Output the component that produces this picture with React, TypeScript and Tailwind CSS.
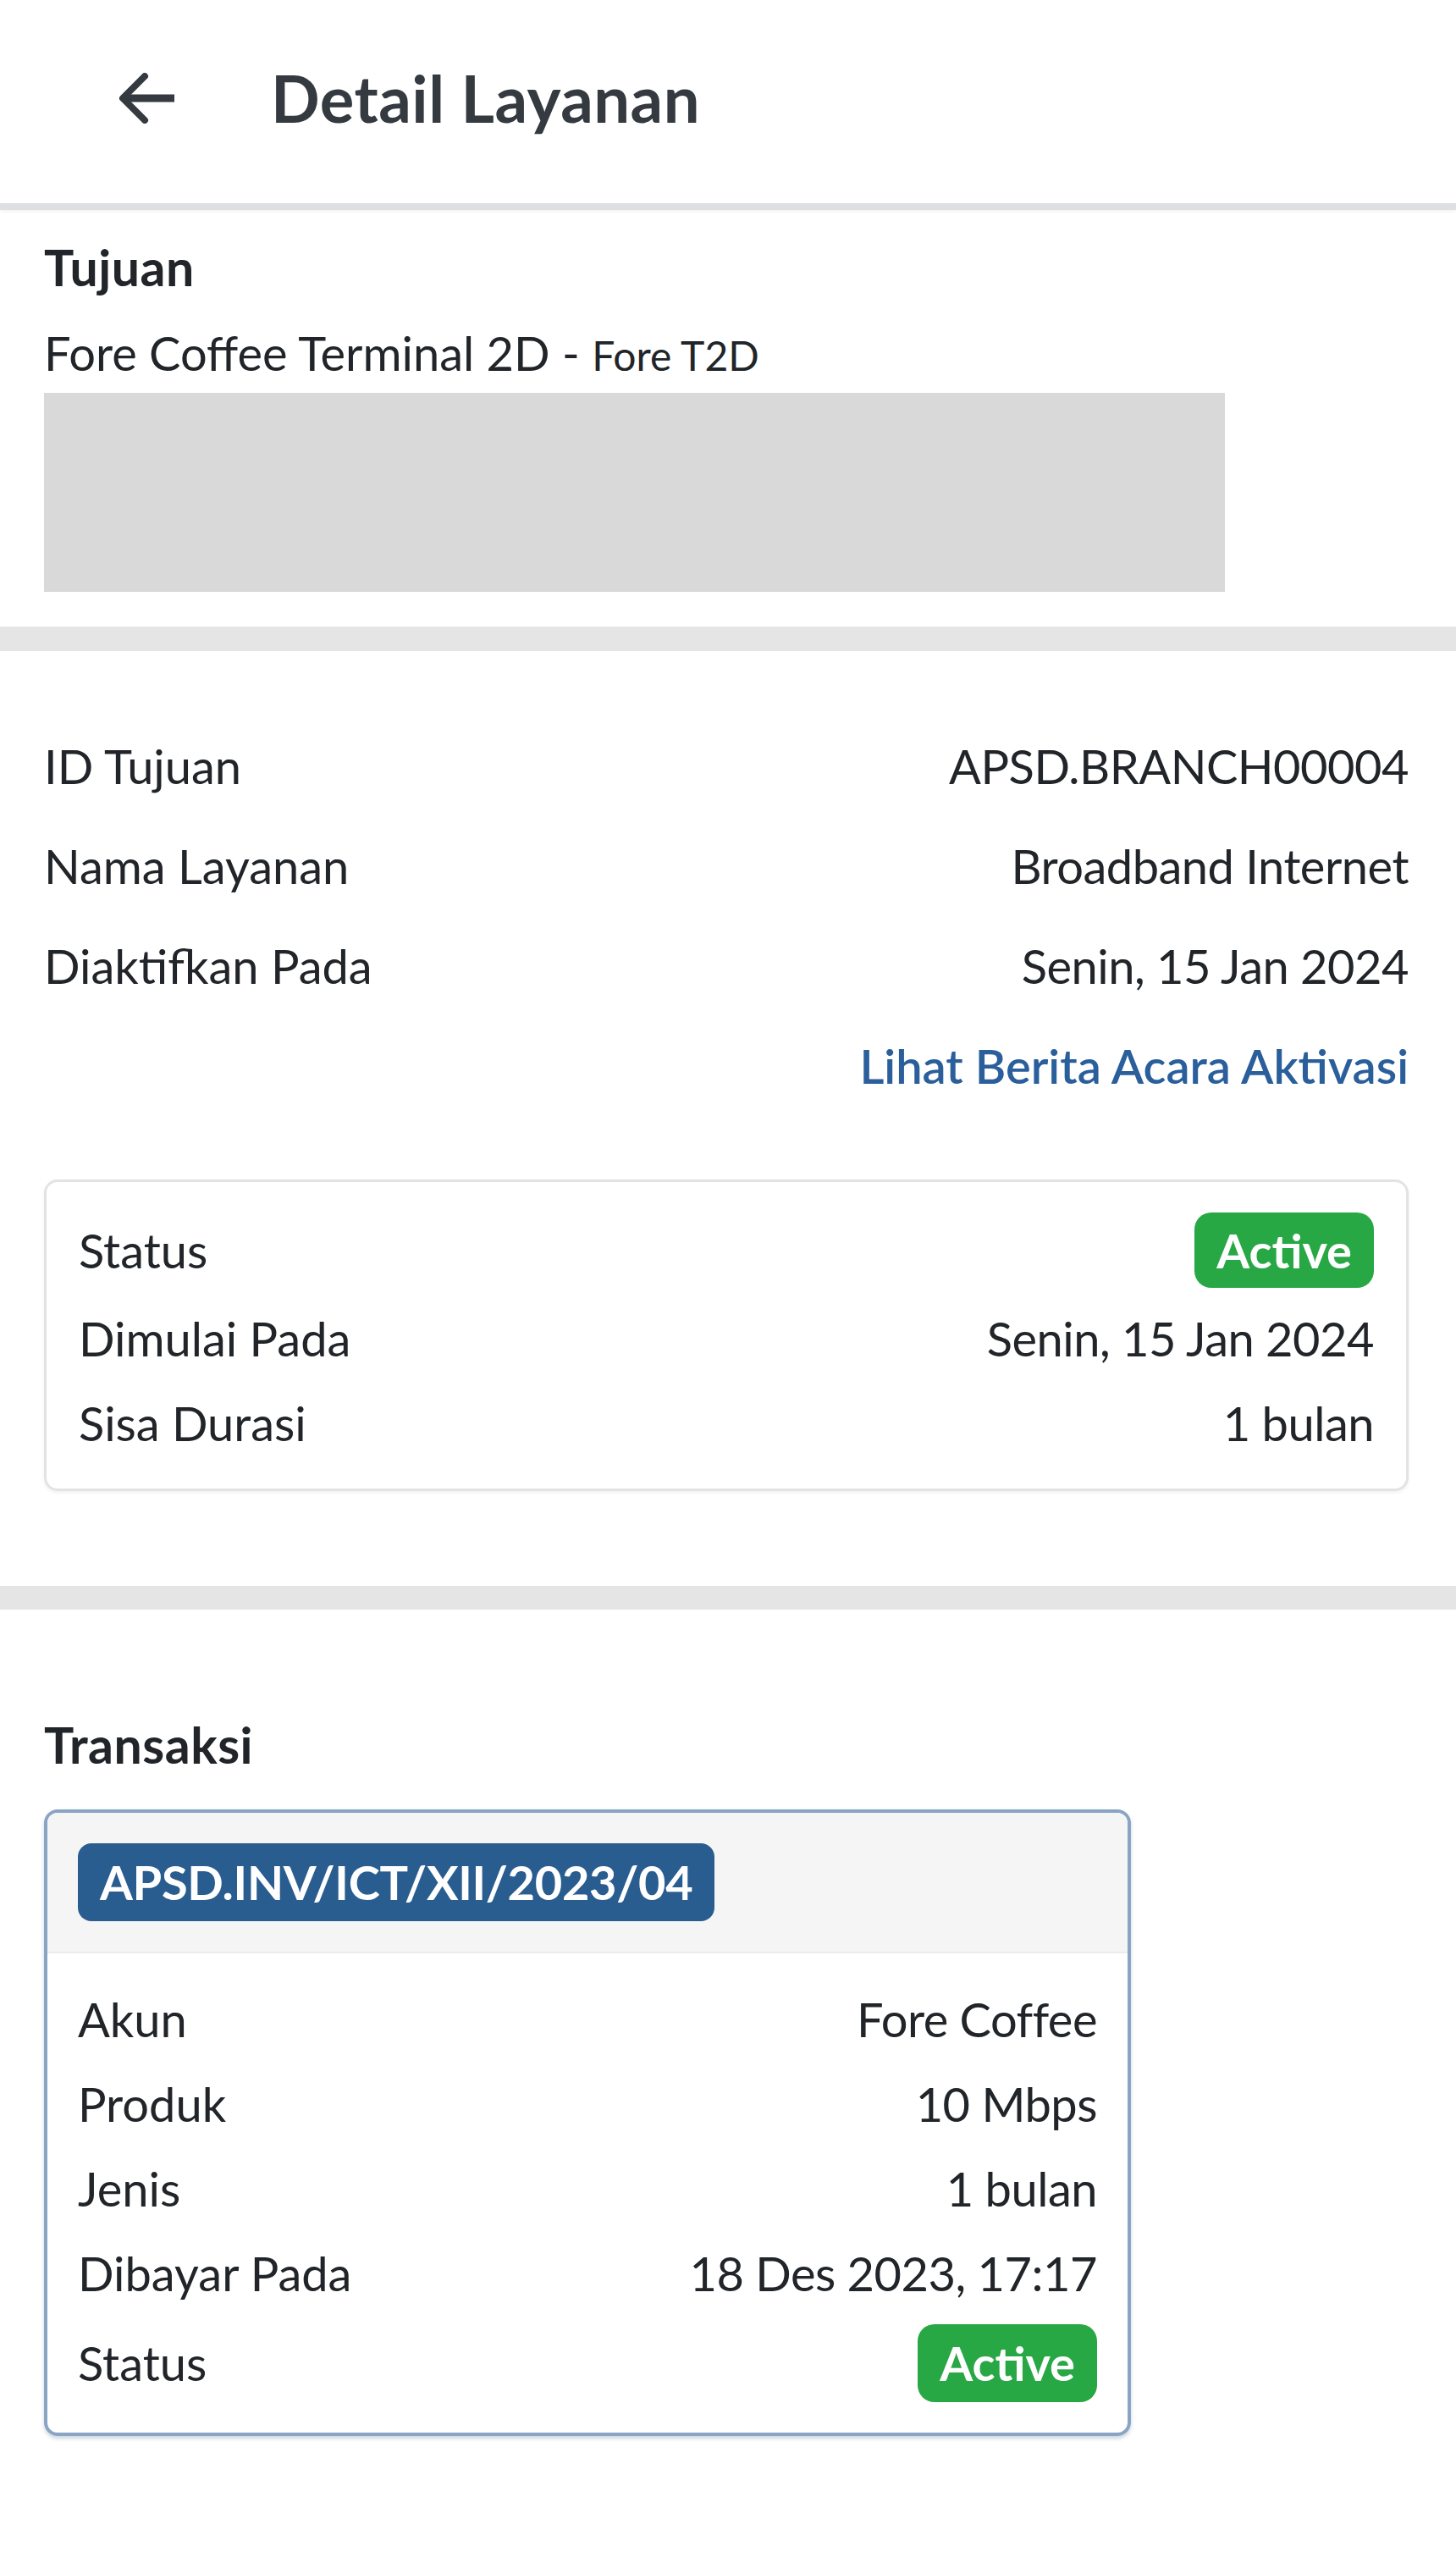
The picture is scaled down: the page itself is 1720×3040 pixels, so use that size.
import React from 'react';

type TRow = { label: string; value: React.ReactNode };

const ActiveBadge: React.FC<{ className?: string }> = ({ className = '' }) => (
  <span
    className={`inline-flex items-center justify-center px-[26px] rounded-[20px] bg-[#28a745] text-white font-bold text-[56px] leading-none ${className}`}
  >
    Active
  </span>
);

const InfoRow: React.FC<TRow> = ({ label, value }) => (
  <div className="flex justify-between items-center min-h-[80px]">
    <span>{label}</span>
    <span className="text-right tracking-[-0.5px]">{value}</span>
  </div>
);

const BackArrow = () => (
  <svg width="70" height="60" viewBox="0 0 70 60" fill="none" className="shrink-0">
    <path d="M66 30H6" stroke="#343a40" strokeWidth="9" strokeLinecap="butt" />
    <path d="M31 4L5 30l26 26" stroke="#343a40" strokeWidth="8" strokeLinecap="round" strokeLinejoin="round" />
  </svg>
);

export default function App() {
  const serviceRows: TRow[] = [
    { label: 'ID Tujuan', value: 'APSD.BRANCH00004' },
    { label: 'Nama Layanan', value: 'Broadband Internet' },
    { label: 'Diaktifkan Pada', value: 'Senin, 15 Jan 2024' },
  ];

  const trxRows: TRow[] = [
    { label: 'Akun', value: 'Fore Coffee' },
    { label: 'Produk', value: '10 Mbps' },
    { label: 'Jenis', value: '1 bulan' },
    { label: 'Dibayar Pada', value: '18 Des 2023, 17:17' },
  ];

  return (
    <div className="w-full min-h-screen bg-white text-[#212529] font-['Lato','Noto_Sans',sans-serif] text-[56px] leading-[80px]">
      {/* header */}
      <header className="h-[248px] pb-[8px] flex items-center pl-[140px] gap-[110px] border-b-[8px] border-[#dddfe2] shadow-[0_2px_3px_rgba(0,0,0,0.05)]">
        <BackArrow />
        <h1 className="text-[76px] font-bold text-[#343a40] tracking-[0.5px]">Detail Layanan</h1>
      </header>

      {/* tujuan */}
      <section className="px-[52px] pt-[28px] pb-[41px]">
        <h2 className="font-bold text-[59px] tracking-[0.5px]">Tujuan</h2>
        <p className="mt-[21px]">
          Fore Coffee Terminal 2D - <span className="text-[48px]">Fore T2D</span>
        </p>
        <div className="mt-[4px] w-[1395px] h-[235px] bg-[#d9d9d9]" />
      </section>

      <div className="h-[29px] bg-[#e5e5e5]" />

      {/* detail layanan */}
      <section className="pr-[56px] pl-[52px] pt-[96px] pb-[112px]">
        <div className="flex flex-col gap-[38px]">
          {serviceRows.map((r) => (
            <InfoRow key={r.label} label={r.label} value={r.value} />
          ))}
          <div className="flex justify-end">
            <a className="text-[#2b5f9c] font-semibold">Lihat Berita Acara Aktivasi</a>
          </div>
        </div>

        <div className="mt-[94px] border-[3px] border-[#e3e3e3] rounded-[16px] px-[38px] pt-[36px] pb-[37px] shadow-[0_2px_4px_rgba(0,0,0,0.06)]">
          <div className="flex flex-col gap-[20px]">
            <div className="flex justify-between items-center">
              <span>Status</span>
              <ActiveBadge className="h-[89px]" />
            </div>
            <InfoRow label="Dimulai Pada" value="Senin, 15 Jan 2024" />
            <InfoRow label="Sisa Durasi" value="1 bulan" />
          </div>
        </div>
      </section>

      <div className="h-[28px] bg-[#e5e5e5]" />

      {/* transaksi */}
      <section className="px-[52px] pt-[120px] pb-[160px]">
        <h2 className="font-bold text-[59px] tracking-[0.5px]">Transaksi</h2>
        <div className="mt-[36px] w-[1284px] border-[4px] border-[#8aa4c4] rounded-[16px] overflow-hidden shadow-[0_3px_4px_rgba(60,90,130,0.25)]">
          <div className="bg-[#f5f5f5] px-[36px] py-[36px] border-b-[2px] border-[#ececec]">
            <span className="inline-flex items-center h-[92px] px-[26px] rounded-[16px] bg-[#2a5d8f] text-white font-bold leading-none tracking-[-0.3px]">
              APSD.INV/ICT/XII/2023/04
            </span>
          </div>
          <div className="px-[36px] pt-[38px] pb-[36px] flex flex-col gap-[20px]">
            {trxRows.map((r) => (
              <InfoRow key={r.label} label={r.label} value={r.value} />
            ))}
            <div className="flex justify-between items-center">
              <span>Status</span>
              <ActiveBadge className="h-[92px]" />
            </div>
          </div>
        </div>
      </section>
    </div>
  );
}
